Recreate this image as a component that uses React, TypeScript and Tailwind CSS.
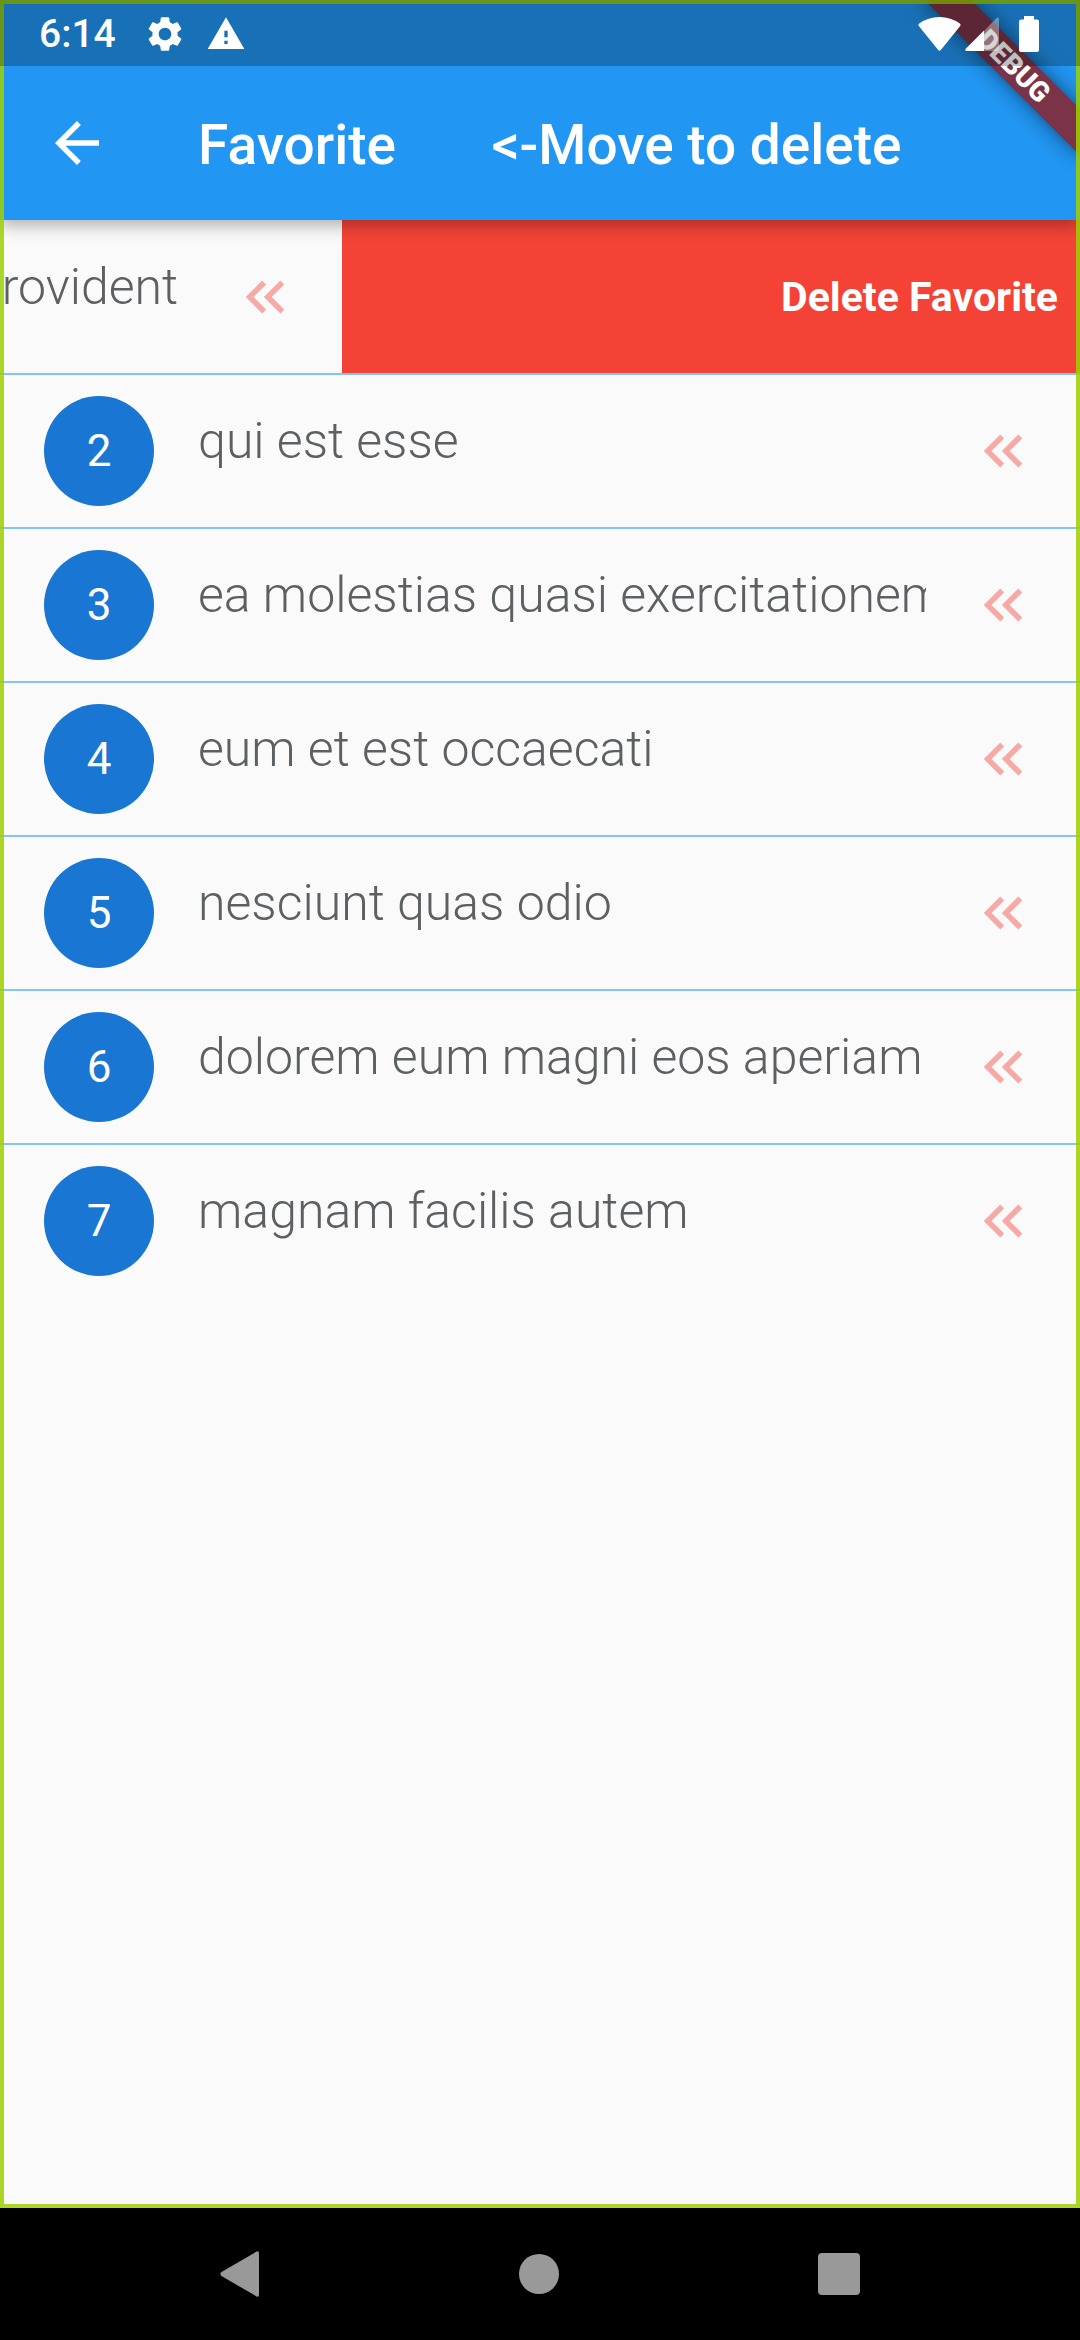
import React from "react";
import {
  MdArrowBack,
  MdKeyboardDoubleArrowLeft,
  MdSettings,
  MdWarning,
} from "react-icons/md";

type Post = { id: number; title: string };

const posts: Post[] = [
  { id: 1, title: "sunt aut facere repellat provident" },
  { id: 2, title: "qui est esse" },
  { id: 3, title: "ea molestias quasi exercitationem" },
  { id: 4, title: "eum et est occaecati" },
  { id: 5, title: "nesciunt quas odio" },
  { id: 6, title: "dolorem eum magni eos aperiam" },
  { id: 7, title: "magnam facilis autem" },
];

function StatusBar() {
  return (
    <div className="absolute inset-x-0 top-0 z-30 flex h-[66px] items-center justify-between bg-black/25 pt-[2px] pr-[41px] pl-[39px] text-white">
      <div className="flex items-center">
        <span className="text-[39px] leading-[46px] font-medium">6:14</span>
        <MdSettings className="ml-7 size-[42px]" aria-label="Settings" />
        <MdWarning className="ml-5 size-[40px]" aria-label="Warning" />
      </div>
      <div className="flex items-center">
        <svg className="h-[34px] w-[43px]" viewBox="0 0 43 34" fill="currentColor" aria-label="Wi-Fi">
          <path d="M1 9.200Q-.3 7.800 1.200 6.600Q10 0 21.500 0T41.800 6.600Q43.300 7.800 42 9.200L22.800 33Q21.500 34.500 20.200 33Z" />
        </svg>
        <svg className="ml-1 h-[34px] w-[34px]" viewBox="0 0 34 34" fill="currentColor" aria-label="Signal">
          <path d="M19 14L31 1.500Q34 -1 34 3V31Q34 34 31 34H19Z" opacity="0.35" />
          <path d="M19 13.500V34H2Q-1 34 1 31.500Z" />
        </svg>
        <svg className="ml-5 h-[36px] w-[20px]" viewBox="0 0 20 36" fill="currentColor" aria-label="Battery">
          <path d="M5 0H15V3.500H18Q20 3.500 20 5.500V34Q20 36 18 36H2Q0 36 0 34V5.500Q0 3.500 2 3.500H5Z" />
        </svg>
      </div>
    </div>
  );
}

function AppBar() {
  return (
    <header className="relative z-10 flex h-[220px] items-center bg-[#2196f3] pt-[66px] pl-[44px] text-white shadow-[0_5px_16px_rgba(0,0,0,0.32)]">
      <button type="button" aria-label="Back">
        <MdArrowBack className="size-[66px]" />
      </button>
      <h1 className="ml-[88px] pt-[3px] text-[55px] leading-[64px] font-medium whitespace-pre">
        {"Favorite       <-Move to delete"}
      </h1>
    </header>
  );
}

function DebugBanner() {
  return (
    <div className="absolute top-0 right-0 z-20 size-[220px] overflow-hidden">
      <div className="absolute top-[77px] right-[-110px] h-[33px] w-[220px] origin-[110px_-77px] rotate-45 bg-[#7b3347] text-center text-[28px] leading-[33px] font-black text-white shadow-[0_0_20px_rgba(0,0,0,0.5)]">
        DEBUG
      </div>
    </div>
  );
}

function PostTile({ post }: { post: Post }) {
  return (
    <div className="flex h-full w-full items-center bg-[#fafafa] px-[44px]">
      <span className="flex size-[110px] shrink-0 items-center justify-center rounded-full bg-[#1976d2] text-[44px] leading-[52px] text-white">
        {post.id}
      </span>
      <span className="mx-[44px] min-w-0 flex-1 overflow-hidden pb-[20px] text-[50px] leading-[58px] font-light whitespace-nowrap text-[#5c6062]">
        {post.title}
      </span>
      <MdKeyboardDoubleArrowLeft className="size-[66px] shrink-0 text-[#f6a9a5]" />
    </div>
  );
}

function DismissingTile({ post }: { post: Post }) {
  return (
    <div className="relative flex h-full items-center justify-end overflow-hidden bg-[#f44336] pr-[22px]">
      <strong className="text-[41px] leading-[48px] font-bold text-white">Delete Favorite</strong>
      <div className="absolute inset-0 -translate-x-[738px]">
        <PostTile post={post} />
      </div>
    </div>
  );
}

function NavBar() {
  return (
    <nav className="flex h-[132px] items-center justify-around bg-black px-[91px] text-[#999999]">
      <button type="button" aria-label="Back">
        <svg className="h-[46px] w-[40px]" viewBox="0 0 40 46" fill="currentColor">
          <path d="M36.500 .6Q39 -.6 39 2.500V43.500Q39 46.600 36.500 45.400L1.500 25Q-.8 23 1.500 21Z" />
        </svg>
      </button>
      <button type="button" aria-label="Home" className="size-[40px] rounded-full bg-[#999999]" />
      <button type="button" aria-label="Recent apps" className="size-[42px] rounded-[4px] bg-[#999999]" />
    </nav>
  );
}

export default function App() {
  return (
    <div className="flex min-h-screen flex-col font-[Roboto,sans-serif]">
      <div className="relative flex flex-1 flex-col overflow-hidden bg-[#fafafa]">
        <AppBar />
        <ul>
          {posts.map((post, index) => (
            <li
              key={post.id}
              className={
                index === 0
                  ? "h-[155px] border-b-2 border-[#84c4f8]"
                  : "h-[154px] border-b-2 border-[#84c4f8] last:border-transparent"
              }
            >
              {index === 0 ? <DismissingTile post={post} /> : <PostTile post={post} />}
            </li>
          ))}
        </ul>
        <DebugBanner />
        <div className="pointer-events-none absolute inset-0 z-20 border-4 border-[#9fd000]/85" />
        <StatusBar />
      </div>
      <NavBar />
    </div>
  );
}
